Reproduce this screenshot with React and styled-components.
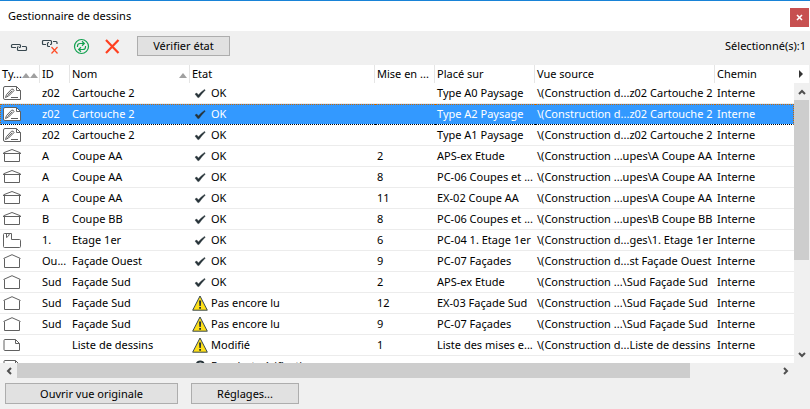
import React from 'react';
import styled, { createGlobalStyle, css } from 'styled-components';

const GlobalStyle = createGlobalStyle`
  * { box-sizing: border-box; }

  body {
    margin: 0;
    background: #f0f0f0;
  }

  body, button, table {
    font-family: "Noto Sans", "Open Sans", sans-serif;
    font-size: 11px;
    line-height: 16px;
    color: #000;
  }
`;

const Window = styled.main`
  display: flex;
  flex-direction: column;
  height: 100vh;
  background: #f0f0f0;
  border-top: 1px solid #1883d7;
`;

const TitleBar = styled.header`
  display: flex;
  align-items: center;
  justify-content: space-between;
  flex: none;
  height: 30px;
  padding: 0 1px 0 8px;
  background: #fff;
`;

const Title = styled.h1`
  margin: 0;
  font-size: 11px;
  font-weight: 400;
`;

const CloseButton = styled.button`
  display: flex;
  align-items: center;
  justify-content: center;
  width: 19px;
  height: 19px;
  margin-top: 3px;
  padding: 0;
  border: 0;
  background: #c75050;
`;

const Toolbar = styled.div`
  display: flex;
  align-items: center;
  flex: none;
  height: 34px;
  padding: 0 4px 4px 11px;
`;

const ToolGroup = styled.div`
  display: flex;
  gap: 15px;
  margin-right: 17px;
`;

const ToolButton = styled.button`
  display: flex;
  width: 16px;
  height: 16px;
  padding: 0;
  border: 0;
  background: none;
`;

const Button = styled.button`
  width: ${(p) => p.$width}px;
  height: ${(p) => p.$height || 21}px;
  padding: 0;
  border: 1px solid #adadad;
  background: #e1e1e1;
`;

const SelectionCount = styled.span`
  margin-left: auto;
`;

const ListArea = styled.section`
  display: flex;
  flex: 1;
  min-height: 0;
  overflow: hidden;
`;

const ListBody = styled.div`
  flex: 1;
  min-width: 0;
  overflow: hidden;
  background: #fff;
`;

const Table = styled.table`
  width: 100%;
  table-layout: fixed;
  border-spacing: 0;
`;

const HeadCell = styled.th`
  height: 18px;
  padding: 0 0 0 2px;
  border-right: 1px solid #e5e5e5;
  font-weight: 400;
  text-align: left;
  white-space: nowrap;

  &:last-child {
    border-right: 0;
  }
`;

const HeadContent = styled.div`
  display: flex;
  align-items: center;
  justify-content: space-between;
  padding-right: 2px;
`;

const Cell = styled.td`
  height: 21px;
  padding: 0 0 0 2px;
  border-bottom: 1px solid #ececec;
  overflow: hidden;
  white-space: nowrap;

  &:first-child {
    padding-left: 3px;
  }
`;

const Row = styled.tr`
  ${(p) => p.$selected && css`
    color: #fff;

    ${Cell} {
      padding-bottom: 1px;
      border-top: 1px dotted #cc6600;
      border-bottom: 1px dotted #000;
      background: linear-gradient(#3399ff 20px, #fff 20px) border-box;
    }

    ${Cell}:first-child {
      padding-left: 2px;
      border-left: 1px dotted #cc6600;
    }

    ${Cell}:last-child {
      border-right: 1px dotted #cc6600;
    }
  `}
`;

const State = styled.span`
  display: flex;
  align-items: center;
  gap: 3px;
`;

const Icon = styled.svg`
  display: block;
  flex: none;
  overflow: visible;
`;

const SideColumn = styled.div`
  display: flex;
  flex-direction: column;
  flex: none;
  width: 16px;
  border-right: 1px solid #f0f0f0;
`;

const HeadMore = styled.button`
  display: flex;
  align-items: center;
  flex: none;
  height: 18px;
  padding: 0 0 0 5px;
  border: 0;
  background: #fff;
`;

const ScrollBar = styled.div`
  display: flex;
  flex: ${(p) => (p.$vertical ? '1' : 'none')};
  flex-direction: ${(p) => (p.$vertical ? 'column' : 'row')};
  min-height: 15px;
  margin-right: ${(p) => (p.$vertical ? 0 : 16)}px;
`;

const ScrollButton = styled.button`
  display: flex;
  align-items: center;
  justify-content: center;
  flex: none;
  width: ${(p) => (p.$vertical ? 15 : 17)}px;
  height: ${(p) => (p.$vertical ? 17 : 15)}px;
  padding: 0;
  border: 0;
  background: none;
`;

const Track = styled.div`
  display: flex;
  flex: 1;
  flex-direction: ${(p) => (p.$vertical ? 'column' : 'row')};
`;

const Thumb = styled.div`
  flex: 0 0 ${(p) => p.$size}%;
  background: #cdcdcd;
`;

const Footer = styled.footer`
  display: flex;
  flex: none;
  gap: 13px;
  height: 31px;
  padding: 5px;
`;

const SortArrow = styled.span`
  width: 0;
  height: 0;
  margin-top: 3px;
  border: solid transparent;
  border-width: 0 4px 5px;
  border-bottom-color: #a0a0a0;
`;

const Arrows = styled.span`
  display: flex;
`;

// type icons
const shapes = {
  drawing: (
    <>
      <path d="M2 .5H13.5L17.5 4.5V13.5H2Q.5 13.5 .5 12V2Q.5 .5 2 .5Z" fill="#fff" />
      <path d="M13.5 .5V4.5H17.5M8 11.5H15" />
      <path d="M2.5 11.5L3.5 8.5L8.6 3.2Q10.4 2.4 11 4.6L5.6 10Z M4.4 9.4L9.2 4.8" />
    </>
  ),
  section: (
    <>
      <path d="M.5 3.8L9 .5L17.5 3.8" />
      <path d="M0 4.5H18M1.5 4.5V12.5H16.5V4.5" />
    </>
  ),
  elevation: <path d="M.5 4.5L9 .7L17.5 4.5M1.5 4.5V13.5H16.5V4.5" />,
  plan: (
    <>
      <path d="M1.5 .5H8.5V6.5H16.5Q17.5 6.5 17.5 7.5V13.5Q17.5 14.5 16.5 14.5H1.5Q.5 14.5 .5 13.5V1.5Q.5 .5 1.5 .5Z" />
      <path d="M3.5 .5V4.5Q6 3.5 6.5 .5" />
    </>
  ),
  page: (
    <>
      <path d="M2 1.5H12.5L16.5 5.5V12.5H2Q1 12.5 1 11.5V2.5Q1 1.5 2 1.5Z" />
      <path d="M12.5 1.5V5.5H16.5" />
    </>
  ),
};

const TypeIcon = ({ type }) => (
  <Icon width="18" height="14" viewBox="0 0 18 14" fill="none" stroke="#606060">
    {shapes[type]}
  </Icon>
);

const StateIcon = ({ state }) => {
  if (state === 'ok') {
    return (
      <Icon width="16" height="16" viewBox="0 0 16 16">
        <path d="M3 9L4.8 8L6.3 10Q9 6.7 12.6 4.4L13.2 5.2Q9.5 8.8 7 12.6H5.8Z" fill="#263238" stroke="#263238" strokeWidth=".4" />
      </Icon>
    );
  }
  if (state === 'unknown') {
    return (
      <Icon width="16" height="16" viewBox="0 0 16 16" fill="none" stroke="#263238" strokeWidth="2">
        <path d="M5 6Q5 3.5 8.3 3.5Q11.5 3.5 11.5 6Q11.5 7.5 8.5 9V11M8.5 12V14" />
      </Icon>
    );
  }
  return (
    <Icon width="16" height="16" viewBox="0 0 16 16">
      <path d="M8 1L15.3 15.2H.7Z" fill="#ffe018" stroke="#37474f" strokeLinejoin="round" />
      <path d="M7 5.5H9.2L8.8 11H7.4ZM7.2 12H9V13.8H7.2Z" fill="#263238" />
    </Icon>
  );
};

const Chevron = ({ turn }) => (
  <Icon width="8" height="8" viewBox="0 0 8 8" fill="none" stroke="#505050" strokeWidth="2">
    <path d="M1 6L4 3L7 6" transform={`rotate(${turn} 4 4)`} />
  </Icon>
);

const LinkIcon = () => (
  <Icon width="16" height="16" viewBox="0 0 16 16" fill="none" stroke="#37474f" strokeWidth="1.2">
    <path d="M5 9.5H1.5Q.5 9.5 .5 8.5V7.5Q.5 6.5 1.5 6.5H8.5Q9.5 6.5 9.5 7.5V8.5Q9.5 9.5 8.5 9.5H8" />
    <path d="M11 8.5H14.5Q15.5 8.5 15.5 9.5V11.5Q15.5 12.5 14.5 12.5H7.5Q6.5 12.5 6.5 11.5V9.5Q6.5 8.5 7.5 8.5" />
  </Icon>
);

const UnlinkIcon = () => (
  <Icon width="16" height="16" viewBox="0 0 16 16" fill="none" stroke="#37474f" strokeWidth="1.2">
    <path d="M4 6.5H1.5Q.5 6.5 .5 5.5V3.5Q.5 2.5 1.5 2.5H8.5Q9.5 2.5 9.5 3.5V5.5Q9.5 6.5 8.5 6.5H8" />
    <path d="M8 8.5H6.5Q5.5 8.5 5.5 7.5V5.5Q5.5 4.5 6.5 4.5H7M11 3.5H14Q15 3.5 15 4.5V6" />
    <path d="M9.5 9L15.5 15.5M15.5 9L9.5 15.5" stroke="#ff4b26" />
  </Icon>
);

const RefreshIcon = () => (
  <Icon width="16" height="16" viewBox="0 0 16 16" fill="none" stroke="#12a150" strokeWidth="1.2">
    <circle cx="8.5" cy="8.5" r="7" />
    <path d="M4.5 9V8Q4.5 5.5 7 5.5H11M9 3.3L11.3 5.5L9 7.7M12.5 8V9Q12.5 11.5 10 11.5H6M8 9.3L5.7 11.5L8 13.7" />
  </Icon>
);

const DeleteIcon = () => (
  <Icon width="16" height="16" viewBox="0 0 16 16" fill="none" stroke="#ff4020" strokeWidth="2.2">
    <path d="M2 2L14.5 15M14.5 2L2 15" />
  </Icon>
);

const columns = [
  { label: 'Ty...', width: 40, arrows: 2 },
  { label: 'ID', width: 30 },
  { label: 'Nom', width: 120, arrows: 1 },
  { label: 'Etat', width: 185 },
  { label: 'Mise en ...', width: 60 },
  { label: 'Placé sur', width: 100 },
  { label: 'Vue source', width: 180 },
  { label: 'Chemin' },
];

const drawings = [
  ['drawing', 'z02', 'Cartouche 2', 'ok', 'OK', '', 'Type A0 Paysage', '\\(Construction d...z02 Cartouche 2'],
  ['drawing', 'z02', 'Cartouche 2', 'ok', 'OK', '', 'Type A2 Paysage', '\\(Construction d...z02 Cartouche 2'],
  ['drawing', 'z02', 'Cartouche 2', 'ok', 'OK', '', 'Type A1 Paysage', '\\(Construction d...z02 Cartouche 2'],
  ['section', 'A', 'Coupe AA', 'ok', 'OK', '2', 'APS-ex Etude', '\\(Construction ...upes\\A Coupe AA'],
  ['section', 'A', 'Coupe AA', 'ok', 'OK', '8', 'PC-06 Coupes et ...', '\\(Construction ...upes\\A Coupe AA'],
  ['section', 'A', 'Coupe AA', 'ok', 'OK', '11', 'EX-02 Coupe AA', '\\(Construction ...upes\\A Coupe AA'],
  ['section', 'B', 'Coupe BB', 'ok', 'OK', '8', 'PC-06 Coupes et ...', '\\(Construction ...upes\\B Coupe BB'],
  ['plan', '1.', 'Etage 1er', 'ok', 'OK', '6', 'PC-04 1. Etage 1er', '\\(Construction d...ges\\1. Etage 1er'],
  ['elevation', 'Ou...', 'Façade Ouest', 'ok', 'OK', '9', 'PC-07 Façades', '\\(Construction d...st Façade Ouest'],
  ['elevation', 'Sud', 'Façade Sud', 'ok', 'OK', '2', 'APS-ex Etude', '\\(Construction ...\\Sud Façade Sud'],
  ['elevation', 'Sud', 'Façade Sud', 'warning', 'Pas encore lu', '12', 'EX-03 Façade Sud', '\\(Construction ...\\Sud Façade Sud'],
  ['elevation', 'Sud', 'Façade Sud', 'warning', 'Pas encore lu', '9', 'PC-07 Façades', '\\(Construction ...\\Sud Façade Sud'],
  ['page', '', 'Liste de dessins', 'warning', 'Modifié', '1', 'Liste des mises e...', '\\(Construction d...Liste de dessins'],
  ['page', '', '', 'unknown', 'Requiert vérification', '', '', ''],
];

const selectedIndex = 1;

const App = () => {
  return (
    <>
      <GlobalStyle />
      <Window>
        <TitleBar>
          <Title>Gestionnaire de dessins</Title>
          <CloseButton aria-label="Fermer">
            <Icon width="5" height="5" viewBox="0 0 5 5" stroke="#fff" strokeWidth="1.6">
              <path d="M0 0L5 5M5 0L0 5" />
            </Icon>
          </CloseButton>
        </TitleBar>

        <Toolbar>
          <ToolGroup>
            <ToolButton aria-label="Lier"><LinkIcon /></ToolButton>
            <ToolButton aria-label="Rompre le lien"><UnlinkIcon /></ToolButton>
            <ToolButton aria-label="Actualiser"><RefreshIcon /></ToolButton>
            <ToolButton aria-label="Supprimer"><DeleteIcon /></ToolButton>
          </ToolGroup>
          <Button $width={93} $height={20}>Vérifier état</Button>
          <SelectionCount>Sélectionné(s):1</SelectionCount>
        </Toolbar>

        <ListArea>
          <ListBody>
            <Table>
              <colgroup>
                {columns.map((c) => <col key={c.label} width={c.width} />)}
              </colgroup>
              <thead>
                <tr>
                  {columns.map((c) => (
                    <HeadCell key={c.label} scope="col">
                      <HeadContent>
                        {c.label}
                        {c.arrows && (
                          <Arrows>
                            <SortArrow />
                            {c.arrows > 1 && <SortArrow />}
                          </Arrows>
                        )}
                      </HeadContent>
                    </HeadCell>
                  ))}
                </tr>
              </thead>
              <tbody>
                {drawings.map(([type, id, name, state, stateText, page, placed, source], i) => (
                  <Row key={i} $selected={i === selectedIndex}>
                    <Cell><TypeIcon type={type} /></Cell>
                    <Cell>{id}</Cell>
                    <Cell>{name}</Cell>
                    <Cell><State><StateIcon state={state} />{stateText}</State></Cell>
                    <Cell>{page}</Cell>
                    <Cell>{placed}</Cell>
                    <Cell>{source}</Cell>
                    <Cell>{source && 'Interne'}</Cell>
                  </Row>
                ))}
              </tbody>
            </Table>
          </ListBody>
          <SideColumn>
            <HeadMore aria-label="Plus de colonnes">
              <Icon width="4" height="8" viewBox="0 0 4 8"><path d="M0 0L4 4L0 8Z" fill="#333" /></Icon>
            </HeadMore>
            <ScrollBar $vertical>
              <ScrollButton $vertical aria-label="Haut"><Chevron turn={0} /></ScrollButton>
              <Track $vertical><Thumb $size={65} /></Track>
              <ScrollButton $vertical aria-label="Bas"><Chevron turn={180} /></ScrollButton>
            </ScrollBar>
          </SideColumn>
        </ListArea>

        <ScrollBar>
          <ScrollButton aria-label="Gauche"><Chevron turn={270} /></ScrollButton>
          <Track><Thumb $size={88.5} /></Track>
          <ScrollButton aria-label="Droite"><Chevron turn={90} /></ScrollButton>
        </ScrollBar>

        <Footer>
          <Button $width={173}>Ouvrir vue originale</Button>
          <Button $width={108}>Réglages...</Button>
        </Footer>
      </Window>
    </>
  );
};

export default App;
